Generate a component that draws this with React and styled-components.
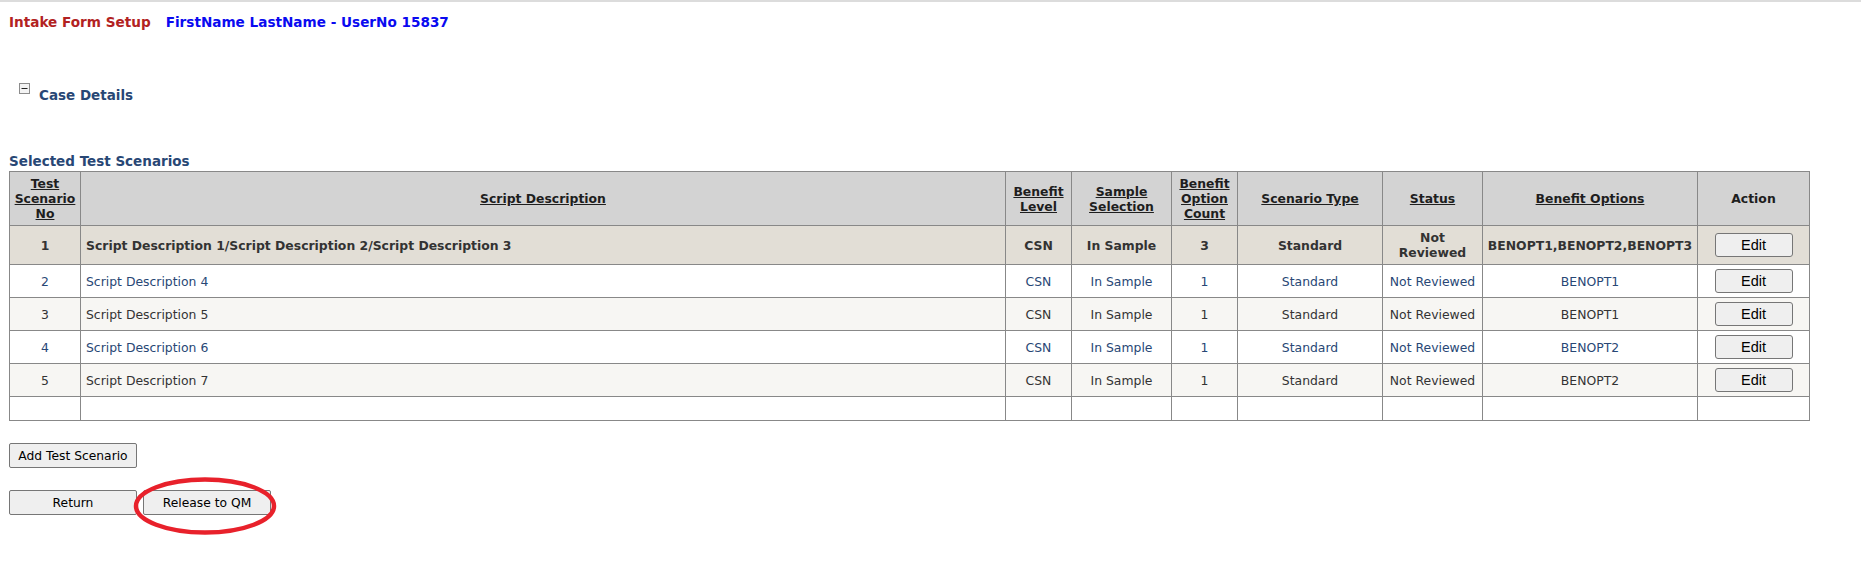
import React from "react";
import styled, { createGlobalStyle } from "styled-components";

const GlobalStyle = createGlobalStyle`
  body {
    margin: 0;
    background: #ffffff;
    font-family: "DejaVu Sans", Verdana, sans-serif;
  }
`;

const Page = styled.div`
  border-top: 2px solid #dcdcdc;
  padding: 12px 9px 60px 9px;
`;

const TitleBar = styled.div`
  display: flex;
  gap: 15px;
  font-size: 13.6px;
  font-weight: bold;
  line-height: 16px;
`;

const PageName = styled.span`
  color: #b22222;
`;

const UserName = styled.span`
  color: #0a0af0;
`;

const CaseRow = styled.div`
  display: flex;
  align-items: flex-start;
  margin-top: 57px;
  padding-left: 10px;
  gap: 9px;
`;

const CollapseIcon = styled.svg`
  margin-top: -4px;
  flex: none;
`;

const SectionTitle = styled.div`
  color: #284775;
  font-size: 13.5px;
  font-weight: bold;
  line-height: 16px;
  margin-top: ${(p) => p.$top || 0}px;
`;

const Grid = styled.table`
  border-collapse: collapse;
  table-layout: fixed;
  width: 1800px;
  margin-top: 2px;
  font-size: 12.4px;
`;

const HeadCell = styled.th`
  background: #d3d3d3;
  border: 1px solid #888888;
  color: #1e1e1e;
  font-weight: bold;
  height: 53px;
  padding: 0 3px;
  text-align: center;
  vertical-align: middle;
`;

const SortLink = styled.a`
  color: inherit;
  text-decoration: underline;
`;

const rowColors = {
  selected: { bg: "#e2ded6", fg: "#333333" },
  alt: { bg: "#ffffff", fg: "#284775" },
  normal: { bg: "#f7f6f3", fg: "#333333" },
  empty: { bg: "#ffffff", fg: "#333333" },
};

const Row = styled.tr`
  background: ${(p) => rowColors[p.$variant].bg};
  color: ${(p) => rowColors[p.$variant].fg};
  font-weight: ${(p) => (p.$variant === "selected" ? "bold" : "normal")};
`;

const Cell = styled.td`
  border: 1px solid #888888;
  height: ${(p) => p.$h}px;
  padding: 0 3px 0 ${(p) => (p.$left ? 5 : 3)}px;
  text-align: ${(p) => (p.$left ? "left" : "center")};
  vertical-align: middle;
`;

const EditButton = styled.button`
  width: 78px;
  height: 24px;
  background: #efefef;
  border: 1px solid #767676;
  border-radius: 3px;
  font-family: "Liberation Sans", Arial, sans-serif;
  font-size: 14.5px;
  color: #000000;
  padding: 0;
`;

const ActionButton = styled.button`
  width: 128px;
  height: 25px;
  background: #efefef;
  border: 1px solid #767676;
  border-radius: 2px;
  font-family: "DejaVu Sans", Verdana, sans-serif;
  font-size: 12.3px;
  color: #000000;
  padding: 0;
`;

const ButtonRow = styled.div`
  position: relative;
  display: flex;
  gap: 6px;
  margin-top: 22px;
`;

const Highlight = styled.svg`
  position: absolute;
  display: block;
  left: 123px;
  top: -15px;
  width: 146px;
  height: 62px;
  overflow: visible;
  pointer-events: none;
`;

const columns = [
  { label: ["Test", "Scenario", "No"], width: 71 },
  { label: ["Script Description"], width: 925 },
  { label: ["Benefit", "Level"], width: 66 },
  { label: ["Sample", "Selection"], width: 100 },
  { label: ["Benefit", "Option", "Count"], width: 66 },
  { label: ["Scenario Type"], width: 145 },
  { label: ["Status"], width: 100 },
  { label: ["Benefit Options"], width: 215 },
  { label: ["Action"], width: 112, plain: true },
];

const scenarios = [
  {
    no: 1,
    desc: "Script Description 1/Script Description 2/Script Description 3",
    level: "CSN",
    sample: "In Sample",
    count: 3,
    type: "Standard",
    status: "Not Reviewed",
    options: "BENOPT1,BENOPT2,BENOPT3",
    variant: "selected",
  },
  { no: 2, desc: "Script Description 4", level: "CSN", sample: "In Sample", count: 1, type: "Standard", status: "Not Reviewed", options: "BENOPT1", variant: "alt" },
  { no: 3, desc: "Script Description 5", level: "CSN", sample: "In Sample", count: 1, type: "Standard", status: "Not Reviewed", options: "BENOPT1", variant: "normal" },
  { no: 4, desc: "Script Description 6", level: "CSN", sample: "In Sample", count: 1, type: "Standard", status: "Not Reviewed", options: "BENOPT2", variant: "alt" },
  { no: 5, desc: "Script Description 7", level: "CSN", sample: "In Sample", count: 1, type: "Standard", status: "Not Reviewed", options: "BENOPT2", variant: "normal" },
];

function HeaderLabel({ col }) {
  const lines = col.label.map((line, i) => (
    <React.Fragment key={line}>
      {i > 0 && <br />}
      {line}
    </React.Fragment>
  ));
  if (col.plain) return lines;
  return <SortLink href="#">{lines}</SortLink>;
}

function ScenarioRow({ s }) {
  const h = s.variant === "selected" ? 38 : 32;
  return (
    <Row $variant={s.variant}>
      <Cell $h={h}>{s.no}</Cell>
      <Cell $h={h} $left>{s.desc}</Cell>
      <Cell $h={h}>{s.level}</Cell>
      <Cell $h={h}>{s.sample}</Cell>
      <Cell $h={h}>{s.count}</Cell>
      <Cell $h={h}>{s.type}</Cell>
      <Cell $h={h}>{s.status}</Cell>
      <Cell $h={h}>{s.options}</Cell>
      <Cell $h={h}>
        <EditButton type="button">Edit</EditButton>
      </Cell>
    </Row>
  );
}

export default function App() {
  return (
    <>
      <GlobalStyle />
      <Page>
        <TitleBar>
          <PageName>Intake Form Setup</PageName>
          <UserName>FirstName LastName - UserNo 15837</UserName>
        </TitleBar>

        <CaseRow>
          <CollapseIcon width="11" height="11" viewBox="0 0 11 11">
            <rect x="0.5" y="0.5" width="10" height="10" fill="#f4f4f4" stroke="#8c8c8c" />
            <rect x="2.5" y="5" width="6" height="1" fill="#222222" />
          </CollapseIcon>
          <SectionTitle>Case Details</SectionTitle>
        </CaseRow>

        <SectionTitle $top={50}>Selected Test Scenarios</SectionTitle>
        <Grid>
          <colgroup>
            {columns.map((c, i) => (
              <col key={i} style={{ width: c.width }} />
            ))}
          </colgroup>
          <thead>
            <tr>
              {columns.map((c, i) => (
                <HeadCell key={i}>
                  <HeaderLabel col={c} />
                </HeadCell>
              ))}
            </tr>
          </thead>
          <tbody>
            {scenarios.map((s) => (
              <ScenarioRow key={s.no} s={s} />
            ))}
            <Row $variant="empty">
              {columns.map((c, i) => (
                <Cell key={i} $h={23} />
              ))}
            </Row>
          </tbody>
        </Grid>

        <ButtonRow>
          <ActionButton type="button">Add Test Scenario</ActionButton>
        </ButtonRow>
        <ButtonRow>
          <ActionButton type="button">Return</ActionButton>
          <ActionButton type="button">Release to QM</ActionButton>
          <Highlight viewBox="0 0 146 62">
            <ellipse cx="73" cy="31" rx="69" ry="26.5" fill="none" stroke="#e8212b" strokeWidth="4.5" />
          </Highlight>
        </ButtonRow>
      </Page>
    </>
  );
}
